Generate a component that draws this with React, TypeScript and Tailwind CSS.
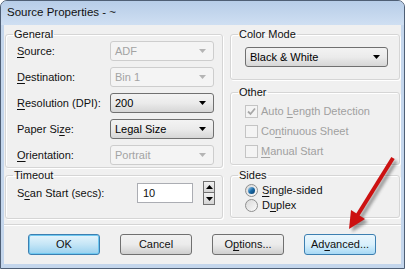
import React from "react";

function Arrow({ disabled }: { disabled?: boolean }) {
  return (
    <svg width="7" height="4" viewBox="0 0 7 4" className="shrink-0">
      <path d="M0 0H7L3.5 4Z" fill={disabled ? "#b4b4b4" : "#000"} />
    </svg>
  );
}

function Combo({ value, disabled, className }: { value: string; disabled?: boolean; className: string }) {
  return (
    <div
      className={
        "h-[20px] flex items-center pl-[4px] pr-[7px] rounded-[3px] border " +
        (disabled
          ? "border-[#cdcdcd] bg-[#f4f4f4] text-[#a3a3a3] "
          : "border-[#707070] bg-gradient-to-b from-[#f3f3f3] via-[#ebebeb] to-[#d6d6d6] text-black ") +
        className
      }
    >
      <span className="flex-1">{value}</span>
      <Arrow disabled={disabled} />
    </div>
  );
}

function U({ children }: { children: React.ReactNode }) {
  return <span className="underline underline-offset-[2px]">{children}</span>;
}

function Row({ label, value, disabled }: { label: React.ReactNode; value: string; disabled?: boolean }) {
  return (
    <div className="h-[20px] flex items-center">
      <span className="pl-[11px]">{label}</span>
      <Combo value={value} disabled={disabled} className="ml-auto w-[104px] mr-[8px]" />
    </div>
  );
}

function Group({ title, className, children }: { title: string; className: string; children?: React.ReactNode }) {
  return (
    <fieldset className={"border border-[#d5d5d5] rounded-[3px] shadow-[inset_1px_1px_0_#fff,1px_1px_0_#fff] " + className}>
      <legend className="ml-[7px] px-[1px] leading-[14px]">{title}</legend>
      {children}
    </fieldset>
  );
}

function Check({ checked, label }: { checked?: boolean; label: React.ReactNode }) {
  return (
    <div className="h-[20px] flex items-center pl-[14px] text-[#a0a0a0]">
      <span className="w-[13px] h-[13px] border border-[#c4c4c4] bg-[#f4f4f4] flex items-center justify-center">
        {checked && (
          <svg width="9" height="9" viewBox="0 0 9 9">
            <path d="M1 4.5L3.5 7L8 1.5" stroke="#a8a8a8" strokeWidth="1.8" fill="none" />
          </svg>
        )}
      </span>
      <span className="ml-[3px]">{label}</span>
    </div>
  );
}

function Radio({ checked, label }: { checked?: boolean; label: React.ReactNode }) {
  return (
    <div className="h-[15px] flex items-center pl-[14px]">
      <span className="w-[13px] h-[13px] rounded-full border border-[#8e8f8f] bg-gradient-to-br from-[#d8d8d8] to-[#fbfbfb] flex items-center justify-center">
        {checked && <span className="w-[7px] h-[7px] rounded-full bg-gradient-to-br from-[#a5d8f3] via-[#1b6ca8] to-[#0a3f6e]" />}
      </span>
      <span className="ml-[4px]">{label}</span>
    </div>
  );
}

function Btn({ label, kind }: { label: React.ReactNode; kind?: "default" | "hover" }) {
  const look =
    kind === "default"
      ? "border-[#3c7fb1] bg-gradient-to-b from-[#e5f4fc] via-[#c4e5f6] to-[#98d1ef] shadow-[inset_0_0_0_1px_#6fc8f0]"
      : kind === "hover"
      ? "border-[#3c7fb1] bg-gradient-to-b from-[#eaf6fd] via-[#d9f0fc] to-[#a7d9f5]"
      : "border-[#707070] bg-gradient-to-b from-[#f2f2f2] via-[#ebebeb] to-[#cfcfcf]";
  return (
    <div className={"w-[72px] h-[21px] rounded-[3px] border flex items-center justify-center " + look}>
      {label}
    </div>
  );
}

export default function App() {
  return (
    <div className="relative w-[405px] h-[269px] bg-[#c4d6ec] border border-[#4f5f75] rounded-t-[7px] flex flex-col font-['Liberation_Sans',Arial,sans-serif] text-[11px] text-[#111] overflow-hidden">
      <div className="h-[24px] shrink-0 px-[6px] flex items-center text-[11.5px] bg-gradient-to-b from-[#b7cde8] to-[#cfdff2]">
        Source Properties - ~
      </div>
      <div className="flex-1 mx-[3px] mb-[4px] bg-[#f0f0f0] flex flex-col">
        <div className="h-[199px] flex pt-[2px] pl-[1px] gap-[7px]">
          <div className="w-[218px] flex flex-col">
            <Group title="General" className="h-[141px]">
              <div className="flex flex-col gap-[6px]">
                <Row label={<><U>S</U>ource:</>} value="ADF" disabled />
                <Row label={<><U>D</U>estination:</>} value="Bin 1" disabled />
                <Row label={<><U>R</U>esolution (DPI):</>} value="200" />
                <Row label={<>Paper Si<U>z</U>e:</>} value="Legal Size" />
                <Row label={<><U>O</U>rientation:</>} value="Portrait" disabled />
              </div>
            </Group>
            <Group title="Timeout" className="h-[51px]">
              <div className="h-[24px] -mt-[1px] flex items-center">
                <span className="pl-[11px]">S<U>c</U>an Start (secs):</span>
                <div className="ml-auto w-[56px] h-[20px] border border-[#abadb3] bg-white flex items-center pl-[5px]">10</div>
                <div className="ml-[10px] mr-[7px] w-[12px] flex flex-col">
                  <div className="h-[12px] border border-[#707070] bg-gradient-to-b from-[#f2f2f2] to-[#d4d4d4] flex items-center justify-center">
                    <svg width="7" height="4" viewBox="0 0 7 4"><path d="M0 4H7L3.5 0Z" fill="#000" /></svg>
                  </div>
                  <div className="h-[12px] border border-t-0 border-[#707070] bg-gradient-to-b from-[#f2f2f2] to-[#d4d4d4] flex items-center justify-center">
                    <Arrow />
                  </div>
                </div>
              </div>
            </Group>
          </div>
          <div className="w-[170px] flex flex-col">
            <Group title="Color Mode" className="h-[53px]">
              <Combo value="Black & White" className="mt-[6px] ml-[14px] w-[143px]" />
            </Group>
            <Group title="Other" className="h-[80px] mt-[5px]">
              <div className="mt-[2px] flex flex-col">
                <Check checked label={<>Auto <U>L</U>ength Detection</>} />
                <Check label={<>Co<U>n</U>tinuous Sheet</>} />
                <Check label={<><U>M</U>anual Start</>} />
              </div>
            </Group>
            <Group title="Sides" className="h-[50px] mt-[3px]">
              <div className="mt-[1px] flex flex-col">
                <Radio checked label={<><U>S</U>ingle-sided</>} />
                <Radio label={<>D<U>u</U>plex</>} />
              </div>
            </Group>
          </div>
        </div>
        <div className="flex-1 border-t border-[#d5d5d5] shadow-[inset_0_1px_0_#fff] flex justify-center gap-[20px] pt-[9px] pr-[1px]">
          <Btn label="OK" kind="default" />
          <Btn label="Cancel" />
          <Btn label={<>O<U>p</U>tions...</>} />
          <Btn label={<>Ad<U>v</U>anced...</>} kind="hover" />
        </div>
      </div>
      <svg className="absolute left-0 top-0 pointer-events-none" width="405" height="269" viewBox="0 0 405 269">
        <defs>
          <filter id="sh" x="-20%" y="-20%" width="140%" height="140%">
            <feGaussianBlur stdDeviation="1.5" />
          </filter>
        </defs>
        <g transform="translate(3 3)" opacity="0.45" filter="url(#sh)">
          <line x1="392" y1="157" x2="356" y2="215" stroke="#333" strokeWidth="4" />
          <polygon points="348,228 364,218 350,209" fill="#333" />
        </g>
        <line x1="392" y1="157" x2="356" y2="215" stroke="#cc1111" strokeWidth="4" />
        <polygon points="348,228 364,218 350,209" fill="#cc1111" />
      </svg>
    </div>
  );
}
